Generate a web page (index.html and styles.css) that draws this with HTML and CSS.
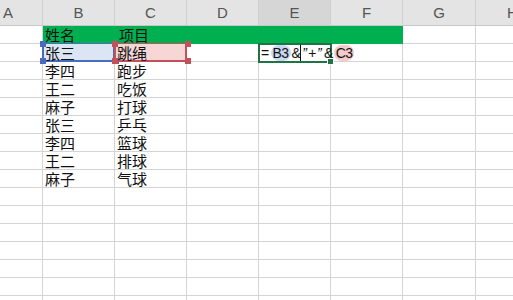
FILE: index.html
```html
<!DOCTYPE html>
<html>
<head>
    <title>Sheet</title>
    <link rel="stylesheet" href="styles.css">
</head>
<body>
    <div class="sheet">
        <div class="col-heads">
            <div class="head col-a">A</div>
            <div class="head">B</div>
            <div class="head">C</div>
            <div class="head">D</div>
            <div class="head active">E</div>
            <div class="head">F</div>
            <div class="head">G</div>
            <div class="head col-h">H</div>
        </div>

        <div class="grid">
            <!-- row 2 -->
            <div class="cell"></div>
            <div class="band">
                <span class="band-text">姓名</span>
                <span class="band-text">项目</span>
            </div>
            <div class="cell"></div>
            <div class="cell last"></div>

            <!-- row 3 -->
            <div class="cell"></div>
            <div class="cell ref ref-blue">张三</div>
            <div class="cell ref ref-red">跳绳</div>
            <div class="cell"></div>
            <div class="cell editing">=<span class="pill pill-blue">B3</span><span class="amp">&amp;</span><span class="caret"></span><span class="q">&#8221;</span>+<span class="q">&#8221;</span><span class="amp">&amp;</span><span class="pill pill-red">C3</span></div>
            <div class="cell"></div>
            <div class="cell"></div>
            <div class="cell last"></div>
        </div>

        <div class="grid" id="rows"></div>
    </div>

    <script>
        const data = [
            ['李四', '跑步'],
            ['王二', '吃饭'],
            ['麻子', '打球'],
            ['张三', '乒乓'],
            ['李四', '篮球'],
            ['王二', '排球'],
            ['麻子', '气球'],
        ];

        function addRow(grid, b, c) {
            const values = ['', b, c, '', '', '', '', ''];
            values.forEach(function(v, i) {
                const cell = document.createElement('div');
                cell.className = i === 7 ? 'cell last' : 'cell';
                cell.textContent = v;
                grid.appendChild(cell);
            });
        }

        const rows = document.getElementById('rows');
        data.forEach(function(r) { addRow(rows, r[0], r[1]); });
        for (let i = 0; i < 7; i++) {
            addRow(rows, '', '');
        }
    </script>
</body>
</html>
```

FILE: styles.css
```css
body {
    margin: 0;
    background: #fff;
    font-family: "Noto Sans CJK SC", "Liberation Sans", sans-serif;
    overflow: hidden;
}
.sheet {
    width: 513px;
    height: 300px;
    overflow: hidden;
}
.col-heads {
    display: grid;
    grid-template-columns: 43px 72px 72px 72px 72px 72px 73px 1fr;
    height: 26px;
    background: #e4e4e4;
    border-bottom: 1px solid #c8c8c8;
    box-sizing: border-box;
}
.head {
    border-right: 1px solid #d0d0d0;
    text-align: center;
    font-family: "Liberation Sans", sans-serif;
    font-size: 15px;
    line-height: 25px;
    color: #555;
    overflow: hidden;
}
.head.col-a {
    text-align: left;
    padding-left: 3px;
}
.head.col-h {
    text-align: left;
    padding-left: 31px;
    border-right: none;
}
.head.active {
    background: #d6d6d6;
}
.grid {
    display: grid;
    grid-template-columns: 43px 72px 72px 72px 72px 72px 73px 1fr;
    grid-auto-rows: 18px;
}
.cell {
    position: relative;
    box-sizing: border-box;
    border-right: 1px solid #d4d4d4;
    border-bottom: 1px solid #d4d4d4;
    font-size: 15px;
    line-height: 17px;
    padding-left: 2px;
    color: #111;
    white-space: nowrap;
}
.cell.last {
    border-right: none;
}
.band {
    grid-column: span 5;
    display: flex;
    background: #00b050;
    font-size: 15px;
    line-height: 17px;
    color: #111;
}
.band-text {
    width: 72px;
    padding-left: 2px;
}

/* referenced cells while editing the formula */
.ref {
    border-top: 1px solid;
    border-left: 2px solid;
    border-right: 2px solid;
    border-bottom: 2px solid;
    margin-top: -1px;
    margin-left: -1px;
    height: 19px;
    line-height: 17px;
    padding-left: 1px;
    z-index: 1;
}
.ref::before,
.ref::after {
    content: "";
    position: absolute;
    left: -4px;
    width: 6px;
    height: 6px;
}
.ref::before {
    top: -3px;
    background: var(--edge);
    box-shadow: 73px 0 0 var(--edge);
}
.ref::after {
    bottom: -4px;
    background: var(--edge);
    box-shadow: 73px 0 0 var(--edge);
}
.ref-blue {
    --edge: #4a6cc0;
    border-color: #4a6cc0;
    background: #dce5f4;
}
.ref-red {
    --edge: #c4505a;
    border-color: #c4505a;
    background: #f7d6d6;
    z-index: 2;
}

.editing {
    border: 2px solid #217346;
    margin-top: -1px;
    margin-left: -1px;
    height: 20px;
    width: 74px;
    padding-left: 1px;
    font-family: "Liberation Sans", "Noto Sans CJK SC", sans-serif;
    font-size: 14px;
    letter-spacing: -0.6px;
    line-height: 16px;
    z-index: 3;
    background: #fff;
}
.editing::after {
    content: "";
    position: absolute;
    right: -4px;
    bottom: -4px;
    width: 5px;
    height: 5px;
    background: #217346;
    border: 1px solid #fff;
}
.pill {
    border-radius: 8px;
    padding: 0 2px;
}
.pill-blue {
    background: #c9d8f0;
    margin-left: 2px;
}
.pill-red {
    background: #f4caca;
    margin-left: 1px;
}
.amp {
    margin-left: 1px;
}
.q {
    font-style: italic;
    margin: 0 2px 0 1px;
}
.caret {
    display: inline-block;
    width: 1px;
    height: 16px;
    background: #111;
    vertical-align: -3px;
}
```
